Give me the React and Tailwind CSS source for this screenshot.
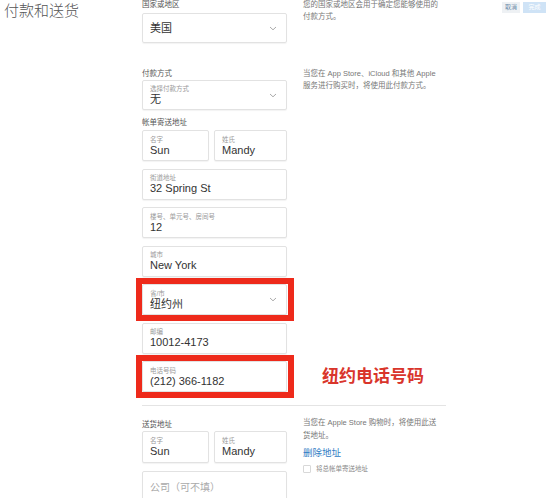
import React from "react";

const FONT = { fontFamily: '"Liberation Sans", "Noto Sans CJK SC", sans-serif' };

function Chevron() {
  return (
    <svg width="8" height="5" viewBox="0 0 8 5" className="shrink-0">
      <path d="M1 1 L4 3.8 L7 1" fill="none" stroke="#a0a0a0" strokeWidth="0.9" />
    </svg>
  );
}

function Field({ label, value, select, className = "", h = "h-[31px]", placeholder }) {
  return (
    <div
      className={`${h} border border-[#e2e2e2] rounded-[2px] bg-white pl-[7px] pr-[9px] flex items-center shadow-[0_1px_1px_rgba(0,0,0,0.05)] ${className}`}
    >
      <div className="flex-1 min-w-0">
        {label && <div className="text-[6.5px] leading-[9px] text-[#9a9a9a]">{label}</div>}
        {value && <div className="text-[11px] leading-[13px] text-[#333]">{value}</div>}
        {placeholder && <div className="text-[10px] leading-[13px] text-[#aaa]">{placeholder}</div>}
      </div>
      {select && <Chevron />}
    </div>
  );
}

function Boxed({ children }) {
  return (
    <div className="relative">
      {children}
      <div className="absolute -left-[6px] -right-[7px] -top-[6px] -bottom-[6px] border-[6px] border-[#ee2a1b]" />
    </div>
  );
}

export default function App() {
  return (
    <div className="w-[550px] h-[498px] bg-white overflow-hidden flex" style={FONT}>
      <div className="w-[142px] shrink-0 pl-[4px] pt-[1px]">
        <div className="text-[15px] leading-[20px] text-[#555] font-light">付款和送货</div>
      </div>

      <div className="flex-1">
        {/* Country */}
        <div className="flex">
          <div className="w-[145px] shrink-0">
            <div className="text-[7.5px] leading-[10px] text-[#555]">国家或地区</div>
            <div className="mt-[3px] h-[30px] border border-[#e2e2e2] rounded-[2px] pl-[7px] pr-[9px] flex items-center shadow-[0_1px_1px_rgba(0,0,0,0.05)]">
              <div className="flex-1 text-[11px] text-[#333]">美国</div>
              <Chevron />
            </div>
          </div>
          <div className="ml-[16px] whitespace-nowrap text-[7.5px] leading-[12px] text-[#777] -mt-[1px]">
            您的国家或地区会用于确定您能够使用的
            <br />
            付款方式。
          </div>
        </div>

        {/* Payment */}
        <div className="flex mt-[26px]">
          <div className="w-[145px] shrink-0">
            <div className="text-[7.5px] leading-[10px] text-[#555]">付款方式</div>
            <Field className="mt-[1px]" h="h-[30px]" label="选择付款方式" value="无" select />
          </div>
          <div className="ml-[16px] whitespace-nowrap text-[7.5px] leading-[12px] text-[#777] -mt-[1px]">
            当您在 App Store、iCloud 和其他 Apple
            <br />
            服务进行购买时，将使用此付款方式。
          </div>
        </div>

        {/* Billing */}
        <div className="mt-[8px] text-[7.5px] leading-[10px] text-[#555]">帐单寄送地址</div>
        <div className="mt-[2px] flex flex-col gap-[7.5px]">
          <div className="w-[145px] flex gap-[5px]">
            <Field className="w-[67px]" label="名字" value="Sun" />
            <Field className="flex-1" label="姓氏" value="Mandy" />
          </div>
          <Field className="w-[145px]" label="街道地址" value="32 Spring St" />
          <Field className="w-[145px]" label="楼号、单元号、房间号" value="12" />
          <Field className="w-[145px]" label="城市" value="New York" />
          <div className="w-[145px]">
            <Boxed>
              <Field label="省/市" value="纽约州" select />
            </Boxed>
          </div>
          <Field className="w-[145px]" label="邮编" value="10012-4173" />
          <div className="flex items-center">
            <div className="w-[145px] shrink-0">
              <Boxed>
                <Field label="电话号码" value="(212) 366-1182" />
              </Boxed>
            </div>
            <div className="ml-[35px] text-[17px] leading-[20px] font-bold text-[#d9352b]">纽约电话号码</div>
          </div>
        </div>

        <div className="mt-[13px] w-[304px] h-px bg-[#e4e4e4]" />

        {/* Shipping */}
        <div className="flex mt-[10px]">
          <div className="w-[145px] shrink-0 mt-[4px]">
            <div className="text-[7.5px] leading-[10px] text-[#555]">送货地址</div>
            <div className="mt-[1px] flex flex-col gap-[8px]">
              <div className="flex gap-[5px]">
                <Field className="w-[67px]" h="h-[32px]" label="名字" value="Sun" />
                <Field className="flex-1" h="h-[32px]" label="姓氏" value="Mandy" />
              </div>
              <Field h="h-[32px]" placeholder="公司（可不填）" />
            </div>
          </div>
          <div className="ml-[16px]">
            <div className="whitespace-nowrap text-[7.5px] leading-[13px] text-[#777]">
              当您在 Apple Store 购物时，将使用此送
              <br />
              货地址。
            </div>
            <div className="mt-[5px] text-[9.5px] leading-[12px] text-[#2f7cc4]">删除地址</div>
            <div className="mt-[5px] flex items-center gap-[5px]">
              <div className="w-[8px] h-[8px] border border-[#d8d8d8] rounded-[1px]" />
              <div className="text-[6.5px] text-[#888]">将总帐单寄送地址</div>
            </div>
          </div>
        </div>
      </div>

      <div className="shrink-0 pr-[4px] pt-[2px] flex gap-[3px] items-start">
        <div className="h-[11px] px-[3px] bg-[#eef1f4] text-[6px] leading-[11px] text-[#6a8aa8]">取消</div>
        <div className="h-[11px] w-[23px] bg-[#cfe3f6] text-[6px] leading-[11px] text-white text-center">完成</div>
      </div>
    </div>
  );
}
